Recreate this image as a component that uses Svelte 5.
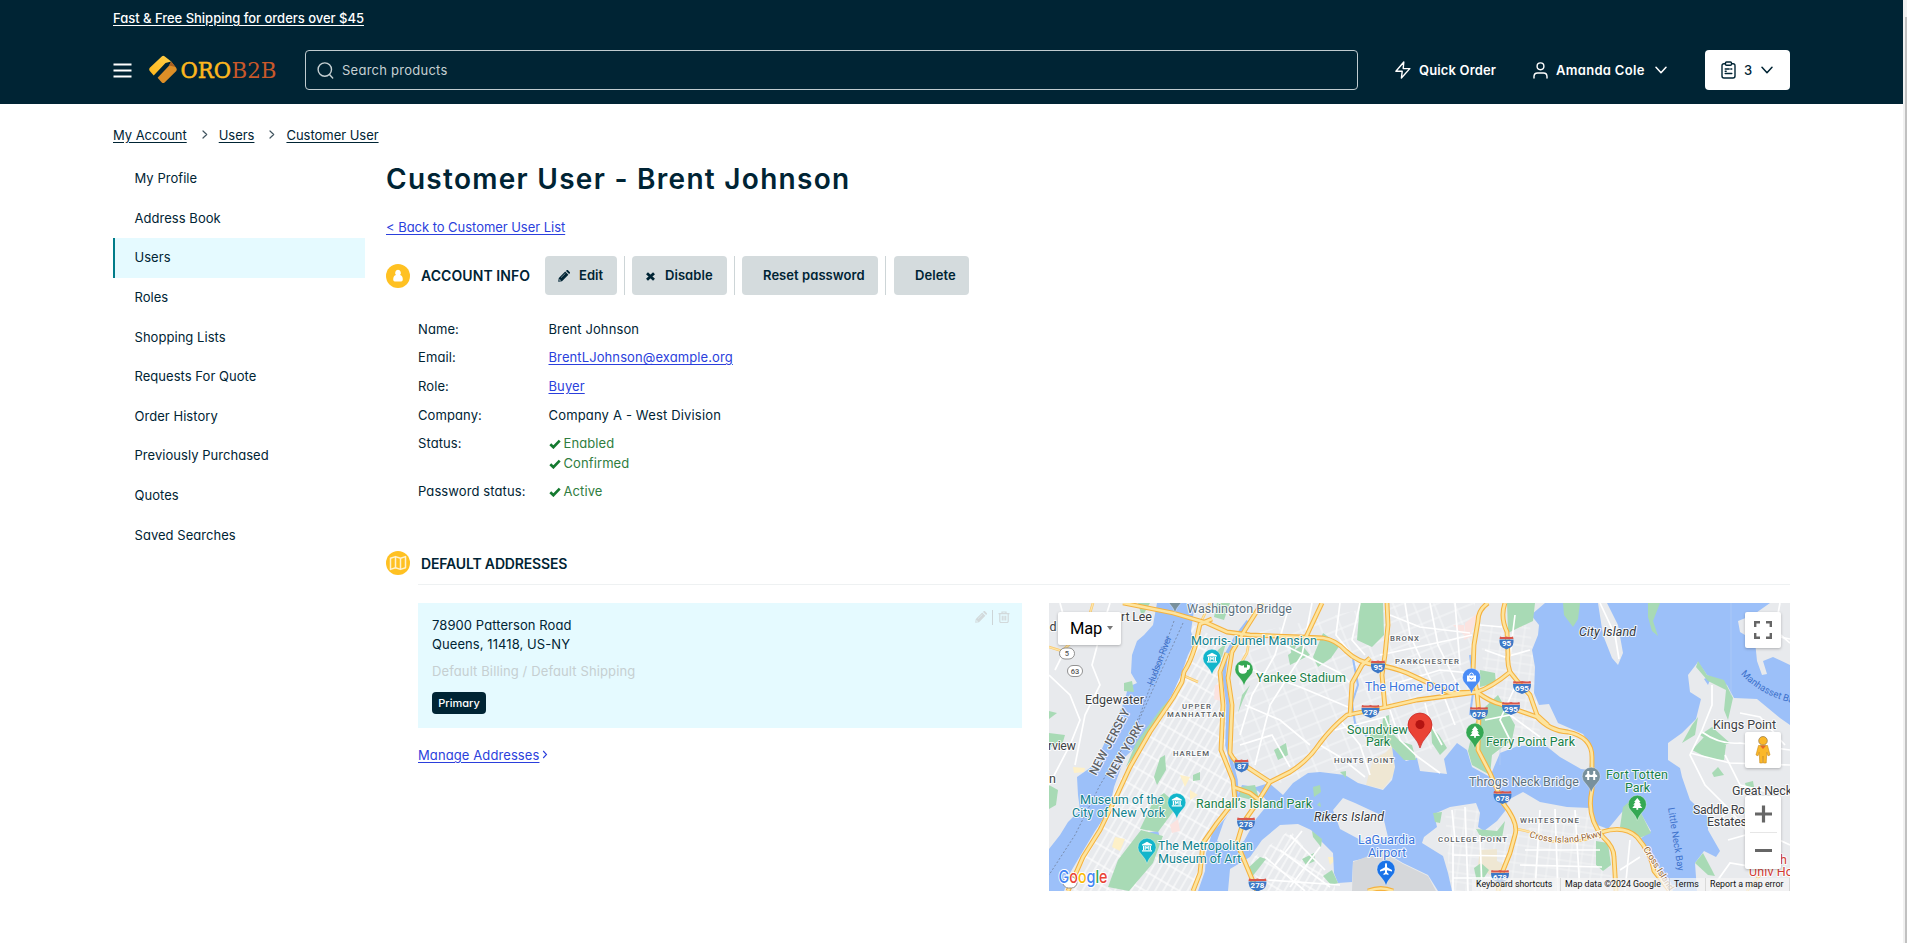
<script>
  const menu = [
    'My Profile', 'Address Book', 'Users', 'Roles', 'Shopping Lists',
    'Requests For Quote', 'Order History', 'Previously Purchased', 'Quotes', 'Saved Searches'
  ];

  const water = '#9cc0f9';
  const land = '#e8eaed';

  const motorways = [
    'M83 8 L133 18 L167 28 L187 37 L210 40 L260 42 L283 43 Q296 45 306 56 Q318 68 337 70 Q352 72 367 78 L410 98 L437 97 Q452 92 470 77 Q467 68 468 60 L467 37 Q460 22 465 8',
    'M470 77 L478 87 L490 100 L497 120 L508 130',
    'M437 97 Q450 107 463 110 L497 122 Q510 136 528 137 Q552 142 552 162 L552 195 Q546 222 563 242 Q574 252 574 262 L576 296',
    'M448 8 Q438 15 438 26 L434 50 L433 77 L437 97 L439 120 L438 155 L450 178 L463 208 Q479 228 475 240 L470 258 L462 278 L458 296',
    'M437 97 L377 105 L347 112 L307 120 Q292 132 280 148 Q268 166 250 177 L230 187 L217 208 L203 228 L197 248 L207 272 L217 296',
    'M222 8 L205 35 L192 57 L188 83 L192 110 L190 158 Q196 170 207 172 L230 187',
    'M347 8 L348 30 L345 60 L342 80 L345 113',
    'M330 63 L322 70 L312 88 L310 121',
    'M282 8 L266 42',
    'M172 24 L160 29 L155 52 Q150 68 144 77 L142 87 L133 103 L110 137 L90 172 L78 198 L60 235 L43 262 L28 296',
    'M187 58 L180 77 L183 110 L181 155 L193 185 L195 205 L177 228 L163 248 L160 278 L153 296',
    'M193 192 L210 198 L219 205',
    'M562 237 Q584 230 597 242 Q611 258 614 276 L630 296',
    'M328 296 Q341 291 353 296'
  ];

  const minors = [
    'M53 8 L48 25 L34 45 L22 56 L9 52', 'M160 29 L170 8', 'M142 80 L158 87', 'M477 234 Q498 238 510 246 Q540 250 563 238',
    'M210 40 L207 58 L196 77', 'M707 296 L720 280'
  ];

  const streets = [
    'M9 80 L30 100 L40 125 L30 150 L9 190', 'M70 8 L60 40 L52 70 L60 90 L45 120 L35 170', 'M20 8 L30 45 L15 75',
    'M250 8 L235 60 L212 100 L200 140', 'M272 8 L262 60 L230 110 L215 170', 'M240 48 L300 78 L312 90', 'M213 75 L260 92 L308 112',
    'M205 110 L240 125 L270 150', 'M200 150 L232 140 L250 172', 'M300 8 L296 40 L312 60', 'M320 8 L312 45 L325 60',
    'M340 60 L410 45 L432 40', 'M350 20 L380 32 L430 38', 'M365 8 L370 40 L395 95', 'M390 8 L398 50 L420 95',
    'M415 8 L420 70', 'M350 90 L400 75 L430 78', 'M295 135 L345 122 L352 140', 'M350 115 L360 145 L378 162 L400 178',
    'M385 108 L390 128 L402 150', 'M405 104 L415 130', 'M280 150 L300 162 L325 182', 'M300 125 L320 150 L330 180',
    'M445 55 L465 62 L490 55', 'M475 20 L470 60', 'M440 30 L462 32', 'M445 125 L470 120 L500 142', 'M475 92 L460 125 L470 145',
    'M560 8 L575 40 L579 64', 'M672 90 L672 110 L662 135 L650 160 L665 190 L690 215 L710 240 L725 270',
    'M662 137 Q680 150 700 148 L750 155', 'M650 158 L690 168 L750 170', 'M740 8 L735 35 L750 48', 'M720 18 L730 40 L750 44',
    'M690 215 L672 232', 'M688 245 L720 236 L750 250', 'M670 296 L690 268 L750 278', 'M685 160 L700 190 L740 200',
    'M700 118 L720 122 L745 150', 'M250 240 L285 275', 'M240 255 L290 292', 'M225 262 L265 296', 'M262 236 L235 270', 'M280 252 L250 292',
    'M228 285 L300 290', 'M500 215 L495 296', 'M515 214 L518 296', 'M535 215 L540 296', 'M485 255 L560 255', 'M480 270 L562 272',
    'M590 245 L585 296', 'M600 262 L580 275', 'M412 215 L415 245', 'M425 212 L428 296', 'M412 260 L466 261', 'M400 245 L466 246',
    'M413 243 L413 296', 'M440 240 L442 296', 'M413 283 L462 283'
  ];

  const parks = [
    'M177 8 L190 8 L184 25 L174 22 Z', 'M84 88 L92 86 L94 97 L84 96 Z', 'M98 8 L110 8 L102 22 Z', 'M122 112 L132 102 L124 116 L95 160 L86 172 L96 148 Z',
    'M9 138 L25 140 L22 150 L9 152 Z', 'M9 190 L18 195 L16 210 L9 214 Z', 'M9 116 L17 118 L9 124 Z',
    'M320 8 L343 8 L344 40 L332 52 L317 45 Z', 'M283 38 L300 50 L291 63 L278 72 L273 62 Z', 'M248 60 L262 50 L270 60 L250 70 Z',
    'M210 90 L203 105 L198 118 L202 100 Z', 'M178 55 L186 48 L182 62 L168 72 Z', 'M250 50 L258 45 L252 62 Z',
    'M117 190 L126 175 L125 160 L120 163 L114 182 Z', 'M114 205 L124 198 L138 210 L118 237 L100 234 Z',
    'M101 235 L123 241 L113 268 L89 296 L68 292 L78 265 Z', 'M153 180 L160 177 L160 185 L153 186 Z', 'M234 155 L246 148 L248 160 L238 165 Z',
    'M343 122 L349 120 L350 136 L360 146 L372 150 L376 165 L364 165 L350 150 L330 146 L330 136 L342 135 Z', 'M391 132 L399 140 L407 153 L400 160 L392 148 Z',
    'M445 112 L458 100 L475 130 L472 145 L452 160 L450 180 L432 170 L428 156 L434 130 Z', 'M440 75 L455 78 L456 88 L440 92 Z',
    'M467 8 L495 8 L493 26 L480 32 L468 38 Z', 'M523 8 L540 8 L538 24 L533 32 L524 20 Z', 'M608 8 L620 8 L613 26 L618 41 L612 36 L608 22 Z',
    'M658 66 L667 80 L684 85 L693 103 L688 125 L684 115 L686 95 L668 86 L656 72 Z', 'M652 130 L658 122 L655 140 L642 148 Z', 'M660 140 L672 132 L690 148 L678 152 Z',
    'M664 142 L686 150 L684 165 L670 164 L652 155 Z', 'M672 178 L678 172 L684 180 L674 182 Z', 'M705 188 L713 186 L714 192 L706 192 Z',
    'M583 212 L590 206 L598 212 L611 238 L600 243 L580 232 Z', 'M556 246 L568 248 L571 270 L563 276 L556 270 Z', 'M655 268 L663 258 L672 275 L675 281 L668 280 Z',
    'M273 192 L280 190 L281 197 L274 202 Z', 'M277 210 L280 207 L281 212 Z', 'M283 281 L292 275 L298 288 L291 290 Z', 'M272 236 L282 244 L281 252 L273 242 Z',
    'M393 218 L402 217 L400 228 L395 227 Z', 'M436 234 L457 236 L465 226 L462 243 L440 241 Z', 'M434 273 L441 268 L449 275 L438 292 Z', 'M200 192 L215 190 L220 207 L200 202 Z',
    'M262 264 L274 258 L275 266 L266 270 Z', 'M206 275 L220 262 L226 264 L212 282 Z', 'M300 177 L306 176 L306 183 Z'
  ];

  const labels = [
    ['Washington Bridge', 147, 18, 105, 'slate'], ['rt Lee', 81, 26, 31, 'town'], ['d', 9.5, 36, 7, 'town'],
    ['Edgewater', 45, 109, 59, 'town'], ['Morris-Jumel Mansion', 151, 50, 126, 'teal'], ['Yankee Stadium', 216, 87, 90, 'green'],
    ['The Home Depot', 325, 96, 94, 'blue'], ['Soundview', 307, 139, 61, 'green'], ['Park', 326, 151, 24, 'green'],
    ['Ferry Point Park', 446, 150.5, 89, 'green'], ['Throgs Neck Bridge', 429, 190.5, 110, 'slate'],
    ['Museum of the', 40, 209, 84, 'teal'], ['City of New York', 32, 222, 93, 'teal'], ['Randall’s Island Park', 156, 213, 116, 'green'],
    ['The Metropolitan', 118, 255, 95, 'teal'], ['Museum of Art', 118, 268, 83, 'teal'], ['Rikers Island', 274, 226, 70, 'island'],
    ['LaGuardia', 318, 249, 57, 'blue'], ['Airport', 328, 261.5, 38, 'blue'], ['City Island', 539, 40.5, 57, 'island'],
    ['Kings Point', 673, 133.5, 63, 'town'], ['Great Neck', 692, 200, 60, 'town'], ['Saddle Rock', 653, 218.5, 64, 'town'],
    ['Estates', 667, 231, 40, 'town'], ['Fort Totten', 566, 184, 62, 'green'], ['Park', 585, 196.5, 25, 'green'],
    ['rview', 8, 154.5, 28, 'town'], ['n', 9, 188, 7, 'town'], ['Univ Ho', 709, 281, 44, 'red'], ['h', 740, 269, 7, 'red'],
    ['UPPER', 142, 113.5, 29, 'area'], ['MANHATTAN', 127, 121.5, 57, 'area'], ['BRONX', 350, 46, 29, 'area'],
    ['PARKCHESTER', 355, 68.5, 64, 'area'], ['HUNTS POINT', 294, 168, 60, 'area'], ['HARLEM', 133, 161, 36, 'area'],
    ['COLLEGE POINT', 398, 247, 69, 'area'], ['WHITESTONE', 480, 228, 59, 'area']
  ];

  const shields = [
    ['95', 338, 71.5], ['95', 466.5, 47.5], ['695', 482, 92], ['295', 471, 113], ['678', 439, 118], ['278', 330.5, 116],
    ['87', 201.5, 170.5], ['278', 206, 228.5], ['278', 217.5, 289.5], ['678', 462.5, 202], ['678', 460, 281]
  ];

  const pins = [
    ['museum', 172, 63, '#12b5cb'], ['museum', 136.8, 207, '#12b5cb'], ['museum', 107, 252, '#12b5cb'],
    ['stadium', 204, 74, '#34a853'], ['bag', 431.5, 82, '#4a8cf6'], ['tree', 435, 137, '#34a853'], ['tree', 597.3, 209, '#34a853'],
    ['bridge', 551.2, 181, '#78909c'], ['bridge', 135, 1, '#78909c'], ['plane', 346, 274, '#1a73e8']
  ];
</script>

{#snippet check()}
  <svg class="check" viewBox="0 0 12 10"><path d="M1.3 5.2 4.4 8.2 10.7 1.6" fill="none" stroke="currentColor" stroke-width="2.7" /></svg>
{/snippet}
{#snippet pencil()}
  <svg class="ic12" viewBox="0 0 12 12"><path fill="currentColor" fill-rule="evenodd" d="M.2 11.8.8 8 7.200 1.600l3.200 3.200L4 11.200zM8 .9l.8-.8q.5-.3 1 0l2.100 2.100q.4.500 0 1L11.100 4zM1.600 9l-.3 1.700 1.700-.3zM7.200 3.200 2.900 7.500l.3.3 4.300-4.300z" /></svg>
{/snippet}
{#snippet chevron()}
  <svg class="chev" viewBox="0 0 12 8"><path d="M1 1.2 6 6.7l5-5.5" fill="none" stroke="currentColor" stroke-width="1.5" stroke-linecap="round" stroke-linejoin="round" /></svg>
{/snippet}
{#snippet sepArrow()}
  <svg class="arrow" viewBox="0 0 6 9"><path d="M1 1l3.700 3.500L1 8" fill="none" stroke="#41545f" stroke-width="1.2" stroke-linecap="round" stroke-linejoin="round" /></svg>
{/snippet}

<div class="window">
  <div class="page">
    <header>
      <div class="wrap promo"><a href="#promo">Fast &amp; Free Shipping for orders over $45</a></div>
      <div class="wrap bar">
        <svg class="burger" viewBox="0 0 19 15"><path d="M.5 1.500h18M.5 7.500h18M.5 13.500h18" stroke="#fff" stroke-width="1.800" /></svg>
        <svg class="logo" viewBox="0 0 128 30">
          <defs>
            <linearGradient id="lg" x1="0" x2="1" y1="1" y2="0"><stop offset="0" stop-color="#ffb71b" /><stop offset="1" stop-color="#ffcf4a" /></linearGradient>
          </defs>
          <path d="M13 1.2q1.200-1 2.500 0l6.700 5.200-5.700 1.500L4.700 20.500.8 16q-1.200-1.600 0-3.200z" fill="url(#lg)" />
          <path d="M22.200 6.400 27.300 13q1 1.500 0 3L15.600 27.400q-1.400 1.400-2.800 0L8.600 22.700 20 10.800z" fill="#dd8f27" />
          <path d="M22.200 6.400 26.400 12l-5-1.200-1.700.2 1-1.800z" fill="#a85f22" />
          <text x="31.500" y="22.800" class="lt oro" textLength="50.500" lengthAdjust="spacingAndGlyphs">ORO</text>
          <text x="82.500" y="22.800" class="lt b2b" textLength="45" lengthAdjust="spacingAndGlyphs">B2B</text>
        </svg>
        <div class="search">
          <svg viewBox="0 0 17 17"><circle cx="7.800" cy="7.600" r="6.700" /><path d="M12.500 12.600 15.700 16" /></svg>
          <span>Search products</span>
        </div>
        <a class="quick" href="#quick">
          <svg viewBox="0 0 16 18"><path d="M8.800 1 .9 10.300h6.300L6.400 17l8.400-9.400H8.200z" /></svg>
          <span>Quick Order</span>
        </a>
        <a class="user" href="#user">
          <svg viewBox="0 0 15 17"><circle cx="7.500" cy="4.300" r="3.400" /><path d="M1 16v-1.400q0-3.600 3.600-3.600h5.800q3.600 0 3.600 3.600V16" /></svg>
          <span>Amanda Cole</span>
          {@render chevron()}
        </a>
        <button class="lists">
          <svg viewBox="0 0 15 18"><path d="M4.500 2.800H3q-2 0-2 2V15q0 2 2 2h9q2 0 2-2V4.800q0-2-2-2h-1.500M5.500 1h4q1 0 1 1v1.200q0 1-1 1h-4q-1 0-1-1V2q0-1 1-1zM4.200 8h4M4.200 12.500h6.600M9.800 8h1M4.200 10.200h1" /></svg>
          <span>3</span>
          {@render chevron()}
        </button>
      </div>
    </header>

    <nav class="wrap crumbs">
      <a href="#account">My Account</a>{@render sepArrow()}<a href="#users">Users</a>{@render sepArrow()}<a href="#cu">Customer User</a>
    </nav>

    <div class="wrap body">
      <aside>
        {#each menu as item}
          <a href="#menu" class:active={item === 'Users'}><span>{item}</span></a>
        {/each}
      </aside>
      <main>
        <h1>Customer User - Brent Johnson</h1>
        <a class="link back" href="#back">&lt; Back to Customer User List</a>

        <section class="head">
          <svg class="disc" viewBox="0 0 24 24"><circle cx="12" cy="12" r="12" fill="#ffc122" /><path d="M12 5.800a2.900 3.100 0 0 1 2.100 5.200q2.700.7 2.700 4.500 0 1.900-1.600 1.900H8.800q-1.600 0-1.600-1.900 0-3.800 2.700-4.500A2.900 3.100 0 0 1 12 5.800z" fill="#fff" /></svg>
          <h2 class="t1">ACCOUNT INFO</h2>
          <div class="actions">
            <button class="edit">{@render pencil()}<span>Edit</span></button><i></i>
            <button class="disable"><svg class="ic9" viewBox="0 0 9 9"><path d="M1 1.200l7 6.600M8 1.200 1 7.800" stroke="currentColor" stroke-width="2.800" /></svg><span>Disable</span></button><i></i>
            <button class="reset"><span>Reset password</span></button><i class="last"></i>
            <button class="delete"><span>Delete</span></button>
          </div>
        </section>

        <dl>
          <dt>Name:</dt><dd>Brent Johnson</dd>
          <dt>Email:</dt><dd><a class="link" href="#mail">BrentLJohnson@example.org</a></dd>
          <dt>Role:</dt><dd><a class="link" href="#role">Buyer</a></dd>
          <dt>Company:</dt><dd class="company">Company A - West Division</dd>
          <dt>Status:</dt>
          <dd class="ok"><div>{@render check()}Enabled</div><div>{@render check()}Confirmed</div></dd>
          <dt>Password status:</dt><dd class="ok"><div>{@render check()}Active</div></dd>
        </dl>

        <section class="head second">
          <svg class="disc" viewBox="0 0 24 24"><circle cx="12" cy="12" r="12" fill="#ffc122" /><path d="M4.500 7.200 9.500 5.600l5 1.600 5-1.600v11.200l-5 1.600-5-1.600-5 1.600zM9.500 5.600v11.200M14.500 7.200v11.200" fill="none" stroke="#fff2cf" stroke-width="1.500" stroke-linejoin="round" /></svg>
          <h2 class="t2">DEFAULT ADDRESSES</h2>
        </section>

        <div class="addresses">
          <div class="left">
            <div class="card">
              <div class="tools">
                {@render pencil()}<i></i>
                <svg class="trash" viewBox="0 0 12 12"><path d="M.5 2.700h11M4 2.500V1h4v1.500M1.800 3v7.300q0 1.200 1.200 1.200h6q1.200 0 1.200-1.200V3M4.300 4.800v4.700M6 4.800v4.700M7.700 4.800v4.700" fill="none" stroke="currentColor" stroke-width="1.200" /></svg>
              </div>
              <p>78900 Patterson Road</p>
              <p>Queens, 11418, US-NY</p>
              <p class="types">Default Billing / Default Shipping</p>
              <span class="badge">Primary</span>
            </div>
            <div class="manage"><a class="link" href="#manage">Manage Addresses</a><svg class="more" viewBox="0 0 6 9"><path d="M1.200 1l3.300 3.500L1.200 8" fill="none" stroke="#2b3fdc" stroke-width="1.100" /></svg></div>
          </div>

          <div class="map">
            <svg class="canvas" viewBox="9 8 741 288">
              <defs>
                <pattern id="grid" width="17" height="7" patternUnits="userSpaceOnUse" patternTransform="rotate(-60 100 100)"><path d="M0 1h17M1 0v7" stroke="#fff" stroke-width="1.100" /></pattern>
                <pattern id="grid2" width="19" height="13" patternUnits="userSpaceOnUse" patternTransform="rotate(-22)"><path d="M0 1h19M1 0v13" stroke="#f8f9fa" stroke-width=".9" /></pattern>
                <pattern id="grid3" width="11" height="9" patternUnits="userSpaceOnUse" patternTransform="rotate(8)"><path d="M0 1h11M1 0v9" stroke="#f6f7f8" stroke-width=".8" /></pattern>
                <path id="manh" d="M701 79 Q720 101 760 110" />
                <path id="cross" d="M489 242 Q525 254 564 240" />
              </defs>
              <rect x="9" y="8" width="741" height="288" fill={land} />
              <path d="M153 30 L187 50 L186 150 L195 205 L160 260 L155 296 L28 296 Z" fill="url(#grid)" />
              <path d="M205 40 L350 8 L435 8 L432 130 L410 150 L300 175 L230 190 L190 160 Z" fill="url(#grid2)" />
              <path d="M250 235 L295 290 L295 296 L220 296 L210 265 Z" fill="url(#grid)" />
              <path d="M405 215 L435 212 L465 240 L550 215 L562 240 L575 296 L410 296 Z M440 30 H490 L500 140 L450 160 Z" fill="url(#grid3)" />

              <path d="M333 164 L345 158 L353 150 L355 178 L343 194 L326 190 Z M440 255 L457 254 L457 266 L468 272 L450 280 L438 270 Z M468 20 L478 20 L482 32 L470 34 Z" fill="#efe7d3" />
              <path d="M425 28 L438 18 L430 42 L424 45 Z M413 30 L424 30 L424 40 Z M175 90 L187 88 L186 108 L174 104 Z M130 230 L138 224 L140 236 L132 238 Z" fill="#fbe3e0" />
              <path d="M50 30 L60 30 L60 40 L50 40 Z M150 195 L158 200 L150 205 Z M75 242 L85 244 L80 256 L72 252 Z M33 172 L45 173 L44 177 L34 178 Z M140 180 L150 182 L145 192 Z M288 262 L298 262 L290 270 Z" fill="#fdf0c8" />

              <path fill={water} d="M117 8 L113 30 L104 40 L97 46 L92 60 L91 78 L97 88 L88 92 L85 105 L80 116 L68 140 L57 165 L50 173 L37 182 L38 200 L40 215 L28 227 L20 240 L9 254 V296 H24 L30 278 L43 256 L55 236 L69 215 L74 192 L85 162 L100 148 L118 122 L132 100 L141 80 L148 60 L154 48 L151 36 L155 8 Z" />
              <path d="M208 26 L196 42 L186 60 L184 80 L188 110 L187 150 L196 185 L197 202" fill="none" stroke={water} stroke-width="3.500" />
              <path d="M313 64 L318 90 L312 108 L315 128 L330 145 M430 60 L434 90 L430 120" fill="none" stroke={water} stroke-width="2" />
              <path fill={water} d="M505 8 L491 20 L499 30 L498 40 L492 55 L495 72 L494 98 L499 110 L509 109 L518 128 L543 139 L552 152 L549 175 L541 174 L520 162 L505 150 L478 151 L460 158 L454 172 L450 182 L432 172 L427 155 L417 148 L404 164 L407 179 L380 176 L377 163 L366 166 L352 152 L355 172 L352 185 L343 195 L318 188 L305 180 L280 177 L268 178 L253 188 L243 200 L229 188 L216 192 L202 190 L196 205 L188 220 L172 238 L166 258 L165 276 L158 296 H188 L190 274 L210 262 L222 245 L240 230 L258 229 L271 235 L281 246 L293 258 L294 278 L298 288 L312 287 L313 266 L330 262 L341 255 L363 268 L388 280 L398 296 H412 L408 278 L403 261 L382 248 L384 242 L397 232 L394 219 L410 212 L436 208 L440 218 L438 232 L444 236 L457 226 L465 216 L468 205 L483 197 L500 207 L527 212 L550 213 L552 228 L568 234 L582 217 L596 210 L611 236 L600 244 L616 268 L633 296 H657 L655 268 L664 256 L676 262 L680 256 L668 235 L668 222 L650 205 L642 182 L640 173 L628 165 L628 148 L642 138 L656 124 L661 104 L650 97 L648 80 L658 67 L667 80 L687 90 L694 103 L717 104 L740 123 L750 130 V8 Z" />
              <path fill={land} d="M730 8 L713 20 L698 26 L700 37 L715 46 L717 66 L722 80 L727 79 L723 66 L733 62 L750 70 V8 Z M558 8 L567 8 L578 30 L583 58 L578 70 L572 63 L563 40 Z M303 203 L315 208 L343 221 L348 242 L330 250 L300 234 L293 215 Z M198 204 L206 192 L218 196 L229 208 L216 224 L204 246 L190 253 L177 246 L184 226 Z" />
              <path fill="#d5d7da" d="M313 267 L341 256 L363 269 L388 281 L396 296 H312 Z" />
              <path fill={water} d="M105 238 L118 236 L121 245 L108 250 Z M664 84 L672 80 L668 90 Z" />
              {#each parks as d}<path {d} fill="#a8dab5" />{/each}
              {#each streets as d}<path {d} fill="none" stroke="#fff" stroke-width="1.700" />{/each}
              <path d="M143 28 L90 145 M134 26 L100 120 L82 154 L60 190 L35 240 L9 280" fill="none" stroke="#70809c" stroke-width=".8" stroke-dasharray="2 2" />
              <path d="M691 8 V100 M460 148 V170" stroke="#b6cdf5" stroke-width=".6" />
              {#each minors as d}<path {d} fill="none" stroke="#fbc86a" stroke-width="2.600" /><path {d} fill="none" stroke="#fde5a8" stroke-width="1.300" />{/each}
              {#each motorways as d}<path {d} fill="none" stroke="#f5b23f" stroke-width="4.800" stroke-linejoin="round" />{/each}
              {#each motorways as d}<path {d} fill="none" stroke="#fde49e" stroke-width="2.700" stroke-linejoin="round" />{/each}

              <g font-size="8" text-anchor="middle" font-weight="700">
                <rect x="19.500" y="53" width="15" height="11" rx="5.500" fill="#fff" stroke="#777" stroke-width=".8" /><text x="27" y="61" fill="#555" font-size="7.500" font-weight="500">5</text>
                <rect x="27.500" y="70.500" width="15" height="11" rx="5.500" fill="#fff" stroke="#777" stroke-width=".8" /><text x="35" y="78.700" fill="#555" font-size="7.500" font-weight="500">63</text>
                <rect x="23" y="282" width="14" height="11" rx="5.500" fill="#fff" stroke="#777" stroke-width=".8" />
                {#each shields as [n, x, y]}
                  <g transform="translate({x} {y})">
                    <path d={n.length > 2 ? 'M-9-3H9Q9 3 5 5 2 6.200 0 7-2 6.200-5 5-9 3-9-3Z' : 'M-7-3H7Q7.500 3 4 5 1.500 6.200 0 7-1.500 6.200-4 5-7.500 3-7-3Z'} fill="#3d78c6" />
                    <path d={n.length > 2 ? 'M-8.500-6Q-4-5 0-6 4-5 8.500-6L9-3.600H-9Z' : 'M-6.500-6Q-3-5 0-6 3-5 6.500-6L7-3.600H-7Z'} fill="#d8564b" />
                    <text y="3.700" fill="#fff" font-size="8">{n}</text>
                  </g>
                {/each}
              </g>

              {#each labels as [t, x, y, w, kind]}
                <text class="lb {kind}" {x} {y} textLength={w}>{t}</text>
              {/each}
              <text class="lb river" transform="translate(113 91) rotate(-69)" textLength="52">Hudson River</text>
              <text class="lb state" transform="translate(56 181) rotate(-62)" textLength="73">NEW JERSEY</text>
              <text class="lb state" transform="translate(73 184) rotate(-60)" textLength="62">NEW YORK</text>
              <text class="lb river" transform="translate(628 213) rotate(81)" textLength="64">Little Neck Bay</text>
              <text class="lb river"><textPath href="#manh">Manhasset Bay</textPath></text>
              <text class="lb pkwy"><textPath href="#cross" textLength="75">Cross Island Pkwy</textPath></text>
              <text class="lb pkwy" transform="translate(603 254) rotate(58)">Cross Island</text>

              {#each pins as [kind, x, y, c]}
                <g transform="translate({x} {y})">
                  <path d="M0 17.500Q-1.200 13-6 8A9 9 0 1 1 6 8Q1.200 13 0 17.500Z" transform="translate(0 -1)" fill={c} stroke="#fff" stroke-opacity=".5" stroke-width=".6" />
                  {#if kind === 'museum'}<path d="M-5-2.500 0-5.200 5-2.500V-1.500H-5ZM-4-1h1.400v4H-4ZM2.600-1H4v4H2.600ZM-5 3.300H5V4.500H-5ZM-1.800 2.800V-1H-.8L0 .4.800-1h1v3.800H1V.8L0 2.200-1 .8v2Z" fill="#fff" />
                  {:else if kind === 'tree'}<path d="M0-6 3.200-2H1.900L4 .8H2.500L5 4H.9V5.800H-.9V4H-5L-2.500.8H-4L-1.900-2H-3.200Z" fill="#fff" />
                  {:else if kind === 'stadium'}<path d="M-5.500-4.500Q-2-2.500 0-4V-1.500H3V-4.500L6-3.500Q6.200 1 3 1.200 3 4.500-1 4.800-5 5-5.500 1Z" fill="#fff" />
                  {:else if kind === 'bag'}<path d="M-4.500-1.500h9V4.500h-9Z" fill="#fff" /><path d="M-2-1.500Q-2-4 0-4T2-1.500" fill="none" stroke="#fff" /><path d="M-2 1Q0 3.500 2 1" fill="none" stroke={c} />
                  {:else if kind === 'bridge'}<path d="M-4-5h2v3Q0 0 2-2V-5h2v3l2 1.500V1H4V4H2V1H-2V4H-4V1H-6V-.5L-4-2Z" fill="#fff" />
                  {:else}<path d="M0-6Q1-6 1-4V-1.700L6 1V2.500L1 1.200V3.500L2.500 4.800V6L0 5.200-2.500 6V4.800L-1 3.500V1.200L-6 2.500V1L-1-1.700V-4Q-1-6 0-6Z" fill="#fff" />{/if}
                </g>
              {/each}
              <path d="M380 153Q378.500 147 373 141Q368 136 368 130A12 12 0 0 1 392 130Q392 136 387 141Q381.500 147 380 153Z" fill="#ea4335" stroke="#c5221f" stroke-width=".7" />
              <circle cx="380" cy="129.500" r="4.500" fill="#b31412" />
              <text class="google" x="18.500" y="288" textLength="49" lengthAdjust="spacingAndGlyphs"><tspan fill="#4285f4">G</tspan><tspan fill="#ea4335">o</tspan><tspan fill="#fbbc04">o</tspan><tspan fill="#4285f4">g</tspan><tspan fill="#34a853">l</tspan><tspan fill="#ea4335">e</tspan></text>
            </svg>
            <div class="ctl type">Map<b></b></div>
            <div class="ctl full"><svg viewBox="0 0 18 18"><path d="M1.200 6V1.200H6M12 1.200h4.800V6M16.800 12v4.800H12M6 16.800H1.200V12" fill="none" stroke="#666" stroke-width="2.400" /></svg></div>
            <div class="ctl peg"><svg viewBox="0 0 16 28"><path d="M3.500 9.500h9L15 19l-2 .8-1.200-3.500-.6 10.700H8.400L8 20l-.4 7H4.800L4.200 16.300 3 19.800 1 19z" fill="#fbb829" stroke="#c98a1a" stroke-width=".6" /><circle cx="8" cy="4.800" r="4.300" fill="#fbb829" stroke="#90764a" stroke-width=".7" /><path d="M5 9.700h6L8 13z" fill="#e5652b" /></svg></div>
            <div class="ctl zoom"><svg viewBox="0 0 36 73"><path d="M10 18h17M18.500 9.500v17M10 54.500h17" stroke="#666" stroke-width="3.200" /><path d="M5 36.500h27" stroke="#e6e6e6" /></svg></div>
            <div class="legal"><span class="l1">Keyboard shortcuts</span><span class="l2">Map data ©2024 Google</span><span class="l3">Terms</span><span class="l4">Report a map error</span></div>
          </div>
        </div>
      </main>
    </div>
  </div>
  <div class="scroll"><div></div></div>
</div>

<style>
  :global(body) { margin: 0; background: #fff; overflow: hidden; }
  .window { display: flex; width: 1907px; height: 943px; overflow: hidden; font-family: Inter, 'Open Sans', sans-serif; font-feature-settings: 'cv11'; font-size: 13px; letter-spacing: 0.1px; color: #002434; }
  .page { flex: 1; }
  .scroll { width: 4px; background: #f1f1f1; padding: 17px 0 0 2px; box-sizing: border-box; }
  .scroll div { height: 926px; background: #c1c1c1; }
  .wrap { width: 1677px; margin: 0 auto; }
  svg { display: block; flex: none; }
  a { color: inherit; text-underline-offset: 2px; }
  header { background: #002434; height: 104px; color: #fff; }
  .promo { height: 38px; line-height: 36px; font-weight: 500; letter-spacing: -0.02px; }
  .bar { display: flex; align-items: center; height: 64px; }
  .burger { width: 19px; height: 15px; }
  .logo { width: 128px; height: 30px; margin-left: 17px; }
  .lt { font-family: 'DejaVu Serif Condensed', 'DejaVu Serif', serif; font-size: 23px; font-stretch: condensed; letter-spacing: 0; }
  .oro { fill: #fdb71e; stroke: #fdb71e; stroke-width: 0.5px; }
  .b2b { fill: #c8582a; }
  .search { display: flex; align-items: center; box-sizing: border-box; width: 1053px; height: 40px; margin-left: 28px; padding-left: 11px; border: 1px solid #c0cbcf; border-radius: 4px; color: #c6d0d3; gap: 8px; letter-spacing: 0.25px; }
  .search svg, .quick svg, .user > svg:first-child, .lists > svg:first-child { fill: none; stroke: currentColor; stroke-width: 1.4; stroke-linejoin: round; stroke-linecap: round; }
  .search svg { width: 17px; height: 17px; }
  .quick, .user { display: flex; align-items: center; text-decoration: none; font-weight: 600; }
  .quick { margin-left: 37px; width: 138px; gap: 8px; letter-spacing: 0.15px; }
  .quick svg { width: 16px; height: 18px; }
  .user { width: 172px; gap: 8px; letter-spacing: 0.3px; }
  .user .chev { margin-left: 2px; }
  .user > svg:first-child { width: 15px; height: 17px; }
  .chev { width: 12px; height: 8px; }
  .lists { display: flex; align-items: center; gap: 8px; box-sizing: border-box; width: 85px; height: 40px; padding: 0 0 0 16px; border: 0; border-radius: 4px; background: #fff; color: #002434; font: 500 13px Inter, sans-serif; }
  .lists > svg:first-child { width: 15px; height: 18px; }
  .lists .chev { margin-left: 1px; }

  .crumbs { display: flex; align-items: center; height: 49px; padding-top: 6px; }
  .crumbs a { letter-spacing: -0.03px; }
  .arrow { width: 6px; height: 9px; margin: 0 11px 0 15px; }
  .body { display: flex; gap: 21px; }
  aside { width: 252px; }
  aside a { display: flex; align-items: center; box-sizing: border-box; height: 39.6px; padding-left: 21.5px; text-decoration: none; letter-spacing: 0.04px; }
  aside span { margin-top: -1px; }
  aside a.active { background: #e5faff; border-left: 2px solid #007c89; padding-left: 19.5px; }
  main { width: 1404px; padding-top: 2px; }
  h1 { margin: 0; font-size: 28px; line-height: 36px; font-weight: 600; letter-spacing: 1.28px; white-space: nowrap; }
  .link { color: #2b3fdc; }
  .back { display: block; width: max-content; margin-top: 21px; line-height: 19px; letter-spacing: -0.04px; }
  .head { display: flex; align-items: center; height: 39px; margin-top: 19px; }
  .disc { width: 24px; height: 24px; }
  h2 { margin: 0 0 0 11px; font-size: 14px; font-weight: 600; letter-spacing: 0.08px; }
  .t1 { width: 110px; white-space: nowrap; }
  .t2 { letter-spacing: -0.16px; }
  .actions { display: flex; margin-left: 14px; }
  .actions i { width: 1px; background: #cdd5d7; margin: 0 7px; }
  .actions i.last { margin-right: 8px; }
  .actions button { display: flex; align-items: center; box-sizing: border-box; height: 39px; padding: 0 0 2px; border: 0; border-radius: 4px; background: #d4dbdd; color: #002434; font: 600 13px Inter, sans-serif; font-feature-settings: 'cv11'; letter-spacing: 0.06px; white-space: nowrap; }
  .ic12 { width: 12px; height: 12px; }
  .ic9 { width: 9px; height: 9px; margin-top: 3px; }
  .edit .ic12 { margin-top: 3px; }
  .actions .edit { width: 72px; padding-left: 13px; gap: 9px; }
  .actions .disable { width: 95px; padding-left: 14px; gap: 10px; }
  .actions .reset { width: 136px; padding-left: 21px; }
  .actions .delete { width: 75px; padding-left: 21px; }
  dl { display: grid; grid-template-columns: 130.5px 1fr; row-gap: 9.2px; margin: 24.500px 0 0 32px; line-height: 19.5px; letter-spacing: 0.1px; }
  dd { margin: 0; }
  .company { letter-spacing: 0.17px; }
  .ok { color: #2f7d40; }
  .ok div { display: flex; align-items: center; gap: 3px; }
  .check { width: 12px; height: 10px; color: #157a30; }
  .second { margin-top: 42px; }
  .addresses { display: flex; gap: 27px; margin-left: 32px; border-top: 1px solid #eef1f2; margin-top: 1px; padding-top: 18px; }
  .left { width: 604px; }
  .card { position: relative; box-sizing: border-box; height: 125.5px; padding: 13px 14px 0; background: #e5faff; }
  .card p { margin: 0; line-height: 19.5px; letter-spacing: 0.08px; }
  .card .types { margin-top: 7px; color: #c6cfd1; letter-spacing: 0.12px; }
  .badge { display: inline-block; box-sizing: border-box; width: 54px; margin-top: 11px; text-align: center; height: 22px; line-height: 22px; border-radius: 4px; background: #002434; color: #fff; font-size: 11px; font-weight: 500; letter-spacing: 0; }
  .tools { position: absolute; right: 12px; top: 7px; display: flex; align-items: center; gap: 5px; color: #d2d9db; }
  .tools i { width: 1px; height: 15px; background: #cdd5d7; }
  .trash { width: 12px; height: 12px; }
  .manage { display: flex; align-items: center; gap: 3px; margin-top: 16.5px; line-height: 20px; }
  .more { width: 6px; height: 9px; }

  .map { position: relative; width: 741px; height: 288px; overflow: hidden; font-family: Roboto, sans-serif; font-feature-settings: normal; letter-spacing: 0; }
  .canvas { width: 741px; height: 288px; }
  .lb { font-size: 12.5px; paint-order: stroke; stroke: #fff; stroke-width: 2px; stroke-linejoin: round; stroke-opacity: 0.85; }
  .town { fill: #3c4043; }
  .green { fill: #188048; }
  .teal { fill: #10828e; }
  .blue { fill: #3a75dd; }
  .slate { fill: #5c7180; }
  .island { fill: #33373b; font-style: italic; }
  .red { fill: #d33b33; }
  .area { fill: #5a5f64; font-size: 7.8px; font-weight: 500; }
  .river { fill: #3c71cb; font-size: 9.500px; stroke: none; }
  .state { fill: #5f6368; font-size: 12px; font-weight: 500; }
  .pkwy { fill: #94602c; font-size: 9px; }
  .google { font: 500 17.5px Inter, sans-serif; paint-order: stroke; stroke: #fff; stroke-width: 2px; }
  .ctl { position: absolute; box-sizing: border-box; background: #fff; border-radius: 2px; box-shadow: 0 1px 3px rgba(0, 0, 0, 0.25); display: flex; align-items: center; justify-content: center; }
  .type { left: 9px; top: 9px; width: 63px; height: 33px; padding-left: 4px; font-size: 16.500px; letter-spacing: -0.2px; color: #000; gap: 5px; }
  .type b { border: 3.5px solid transparent; border-top: 4px solid #777; border-bottom: 0; }
  .full { right: 9px; top: 9px; width: 36px; height: 36px; }
  .full svg { width: 18px; height: 18px; }
  .peg { right: 9px; top: 129px; width: 36px; height: 36px; }
  .peg svg { width: 16px; height: 28px; }
  .zoom { right: 9px; top: 193px; width: 36px; height: 73px; }
  .zoom svg { width: 36px; height: 73px; }
  .legal { position: absolute; right: 0; bottom: 0; display: flex; height: 13px; line-height: 13px; font-size: 8.8px; color: #111; background: rgba(245, 245, 245, 0.72); white-space: nowrap; }
  .legal span { box-sizing: border-box; padding-left: 4px; border-right: 1px solid rgba(200, 200, 200, 0.6); }
  .l1 { width: 89px; }
  .l2 { width: 109px; }
  .l3 { width: 36px; }
  .l4 { width: 84px; }
</style>
